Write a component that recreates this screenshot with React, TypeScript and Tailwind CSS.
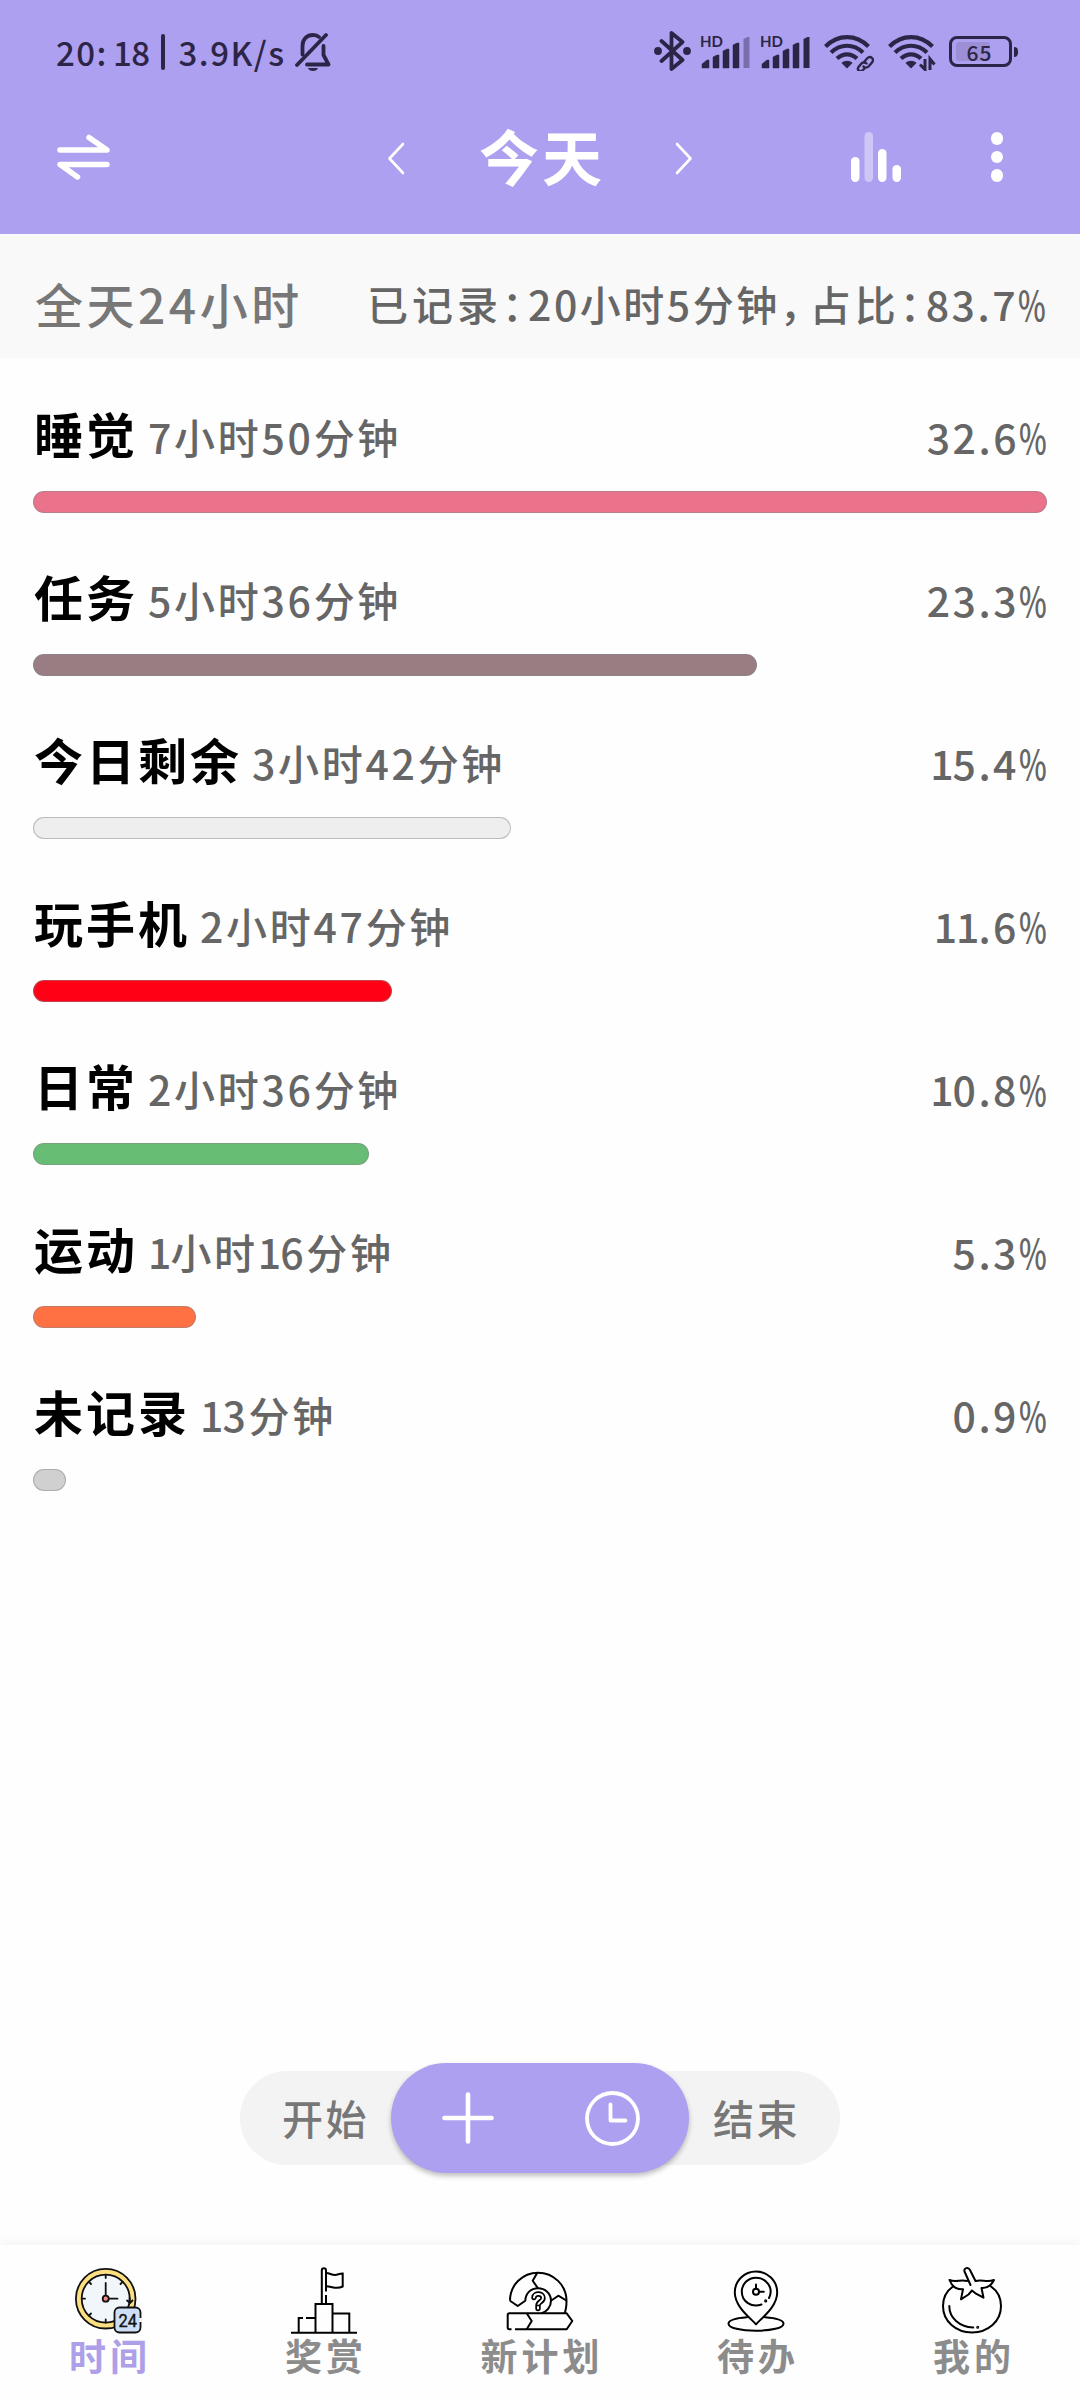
import type { ReactNode } from 'react';

interface Record {
  name: string;
  time: string;
  percent: string;
  width: number;
  color: string;
}

const records: Record[] = [
  { name: '睡觉', time: '7小时50分钟', percent: '32.6', width: 1014, color: '#ea728a' },
  { name: '任务', time: '5小时36分钟', percent: '23.3', width: 724, color: '#997d82' },
  { name: '今日剩余', time: '3小时42分钟', percent: '15.4', width: 478, color: '#eeeeee' },
  { name: '玩手机', time: '2小时47分钟', percent: '11.6', width: 359, color: '#ff0014' },
  { name: '日常', time: '2小时36分钟', percent: '10.8', width: 336, color: '#67bd74' },
  { name: '运动', time: '1小时16分钟', percent: '5.3', width: 163, color: '#ff7143' },
  { name: '未记录', time: '13分钟', percent: '0.9', width: 33, color: '#d0d0d0' },
];

// the digit 1 is set a little tighter than the others
function Digits({ value }: { value: string }) {
  return (
    <>
      {value.split(/(1)/).map((part, i) =>
        part === '1' ? <span key={i} className="tracking-[-1px]">1</span> : part,
      )}
    </>
  );
}

function Percent({ value }: { value: string }) {
  return (
    <span className="flex">
      <span><Digits value={value} /></span>
      <span className="w-[28px] origin-left scale-x-[0.72]">%</span>
    </span>
  );
}

function SignalBars({ faded }: { faded?: boolean }) {
  return (
    <svg width="52" height="36" viewBox="0 -2 52 36" fill="#2d2547" overflow="visible">
      <text x="0" y="10.500" fontSize="15.500" fontWeight="700" fontFamily="Lato, sans-serif" textLength="23" lengthAdjust="spacingAndGlyphs">HD</text>
      <path d="M2 32v-4l5-4h2v8zM13 32V21l4-2h2v13zM23 32V15l4-2h2v19zM33 32V9l4-2h2v25z" stroke="#2d2547" strokeWidth="0.5" />
      <path d="M43.500 32V3l4-2h2v31z" opacity={faded ? 0.4 : 1} />
    </svg>
  );
}

function Wifi({ children }: { children: ReactNode }) {
  return (
    <svg width="50" height="38" viewBox="0 0 50 38" fill="none" stroke="#2d2547" strokeWidth="4.200">
      <path d="M1.500 13.500C14 1 32 1 44.500 13.500" />
      <path d="M7 19.500C16.500 10.500 29.500 10.500 39 19.500" />
      <path d="M13 25.500C19 20 27 20 33 25.500" />
      <path d="M23 35.500l-5.500-5.500c3-3 8-3 11 0z" fill="#2d2547" stroke="none" />
      {children}
    </svg>
  );
}

function StatusBar() {
  return (
    <div className="h-[108px] pl-14 pr-[62px] flex items-start justify-between text-[#2d2547]">
      <div className="flex items-center pt-[28px] font-medium text-[33px] leading-[48px]">
        <span className="w-[95px] tracking-[1.500px]">20:<span className="pl-[5px] tracking-[-0.500px]">18</span></span>
        <span className="w-[3.500px] h-[36px] ml-[10px] mr-[14px] rounded-full bg-[#2d2547]" />
        <span className="w-[107px] tracking-[1.500px]">3.9K/s</span>
        <svg className="ml-[9px]" width="36" height="40" viewBox="0 0 36 40" fill="none" stroke="#2d2547" strokeWidth="3.800" strokeLinecap="round" strokeLinejoin="round">
          <path d="M2 33L31 3" />
          <path d="M7.500 22.500V14c0-7 4.500-11 10.500-11 2.500 0 4.500.5 6 2" />
          <path d="M28.500 14v9l5 9.500H12" />
          <path d="M13 36h10c-1 4-9 4-10 0z" fill="#2d2547" stroke="none" />
        </svg>
      </div>
      <div className="flex items-start pt-[31px]">
        <svg width="37" height="40" viewBox="0 0 37 40" fill="none" stroke="#2d2547" strokeWidth="3.800" strokeLinejoin="round" strokeLinecap="round">
          <path d="M7.500 10l21 19-11 9V2l11 9-21 19" />
          <circle cx="4" cy="20" r="2" fill="#2d2547" />
          <circle cx="33" cy="20" r="2" fill="#2d2547" />
        </svg>
        <div className="ml-[9px] mt-[3px] flex gap-2">
          <SignalBars faded />
          <SignalBars />
        </div>
        <div className="ml-3 mt-0.5 flex gap-[14px]">
          <Wifi>
            <g strokeWidth="2.400" strokeLinecap="round">
              <path d="M40.500 28.500l2.500-3c3.500-3.500 8 .5 5 4l-3.500 4c-1.500 1.500-4 1.500-5 0" />
              <path d="M42.500 30.500c-1.500-1.500-4-1.500-5.500.5l-2.500 3c-2 3.500 2 5.500 4.500 3l1.500-1.500" />
            </g>
          </Wifi>
          <Wifi>
            <path d="M37 26v10.500l-5-5M42 37V26l4.500 5.500" strokeWidth="3" />
          </Wifi>
        </div>
        <div className="ml-[11px] mt-[5px] flex items-center">
          <div className="relative w-[63px] h-[31px] rounded-[8px] border-[3px] border-[#2d2547] flex justify-center items-center">
            <div className="absolute left-[4px] top-[3px] w-[34px] h-[19px] rounded-[3px] bg-[#9d8fd6]" />
            <span className="relative pr-0.5 text-[21px] leading-[20px] tracking-[1px] font-medium">65</span>
          </div>
          <div className="ml-[2px] w-[4px] h-[10px] rounded-r bg-[#2d2547]" />
        </div>
      </div>
    </div>
  );
}

function TitleBar() {
  return (
    <div className="h-[126px] pl-[57px] pr-[77px] flex items-start text-white">
      <svg className="mt-[25px]" width="53" height="48" viewBox="0 0 53 48" fill="none" stroke="white" strokeWidth="5.500" strokeLinecap="round" strokeLinejoin="round">
        <path d="M3 17h47L32 4.500M50 31.500H3L20.500 44" />
      </svg>
      <svg className="ml-[277px] mt-[34px]" width="18" height="33" viewBox="0 0 18 33" fill="none" stroke="white" strokeWidth="2.600" strokeLinecap="round" strokeLinejoin="round">
        <path d="M16 2L2.500 16.500 16 31" />
      </svg>
      <h1 className="ml-[74px] w-[126px] mt-[3px] text-[60px] leading-[88px] tracking-[3px] font-bold whitespace-nowrap">今天</h1>
      <svg className="ml-[70px] mt-[34px]" width="18" height="33" viewBox="0 0 18 33" fill="none" stroke="white" strokeWidth="2.600" strokeLinecap="round" strokeLinejoin="round">
        <path d="M2 2l13.500 14.500L2 31" />
      </svg>
      <svg className="ml-auto mt-6" width="50" height="50" viewBox="0 0 50 50" fill="white">
        <rect x="0" y="25" width="8.500" height="25" rx="4.200" />
        <rect x="13.500" y="0" width="8.500" height="50" rx="4.200" opacity="0.4" />
        <rect x="27" y="17" width="8.500" height="33" rx="4.200" />
        <rect x="41.500" y="33" width="8.500" height="17" rx="4.200" />
      </svg>
      <div className="ml-[90px] mt-6 flex flex-col gap-[6px]">
        <span className="size-[12.500px] rounded-full bg-white" />
        <span className="size-[12.500px] rounded-full bg-white" />
        <span className="size-[12.500px] rounded-full bg-white" />
      </div>
    </div>
  );
}

function TimeIcon() {
  return (
    <svg width="72" height="72" viewBox="0 0 72 72" fill="none" stroke="#111" strokeWidth="1.800" strokeLinecap="round">
      <circle cx="33.700" cy="32.700" r="29.800" fill="#fbdf80" />
      <circle cx="33.700" cy="32.700" r="24" fill="#f1f6fa" />
      <path d="M33.700 9v3M33.700 53.500v3M10 32.700h3M17 16l2 2M50.500 16l-2 2M17 49.500l2-2" />
      <path d="M55 34.500l3 2.500 2.500-2.500M57.700 32v4" />
      <path d="M33.700 17v13M37 32.700h8.500" />
      <circle cx="33.700" cy="32.700" r="3" fill="#f58b8b" />
      <rect x="42.500" y="41.500" width="26" height="25" rx="5" fill="#cddff6" />
      <path d="M68.500 52v4" stroke="white" strokeWidth="2.500" strokeLinecap="butt" />
      <text x="46.500" y="61" fontSize="19" stroke="#111" strokeWidth="0.400" fill="#111" fontFamily="Roboto, sans-serif" textLength="18.500" lengthAdjust="spacingAndGlyphs">24</text>
    </svg>
  );
}

function RewardIcon() {
  return (
    <svg width="72" height="72" viewBox="0 0 72 72" fill="none" stroke="black" strokeWidth="2">
      <path d="M3 66.700h66" />
      <path d="M27.500 66.500V38h17v28.500M44.500 47.500h16.800v19M10.700 66.500V52H15M18 52h9.500" />
      <path d="M33.800 38V4.500c0-3 4.200-3 4.200 0v21M38 29v9" />
      <path d="M38 7c4 0 5 2 9 2 3 0 4-1.500 7.700-1.500v13c-3 1.500-5 1.500-7.700 1.200-4-.5-5-1.500-9-1.500" />
    </svg>
  );
}

function PlanIcon() {
  return (
    <svg width="72" height="72" viewBox="0 0 72 72" fill="none" stroke="black" strokeWidth="2" strokeLinejoin="round">
      <path d="M6 34.700C6 19 18.500 6.700 34 6.700S62.500 19 62.500 35c0 5-.5 9-2 12.300" />
      <path d="M6 34.700l7.700 5.300 7.600-5.300C21.500 27 27 22.300 34 22.300s13 5.200 13 12.400c0 6.500-4.500 11-9.500 12.600" />
      <path d="M33.300 6.700l-4.600 8L34 22.300M47.300 34.500l7-4.800 8 4.800" />
      <path d="M7.500 63.300H5.500c-1.200 0-1.800-.6-1.800-1.800V49c0-1.200.6-1.700 1.800-1.700h57.200l5.600 7.700-5.600 8.300H11" />
      <path d="M22.700 47.300l5 7.700-5 8.300" />
      <path d="M30 31.500c.5-5 9-4.500 9 .5 0 4-5 3.500-5 7.500v3" strokeWidth="5.400" strokeLinecap="round" />
      <path d="M30 31.500c.5-5 9-4.500 9 .5 0 4-5 3.500-5 7.500v3" stroke="white" strokeWidth="2" strokeLinecap="round" />
      <path d="M32 39.500h4" strokeWidth="1.500" />
    </svg>
  );
}

function TodoIcon() {
  return (
    <svg width="72" height="72" viewBox="0 0 72 72" fill="none" stroke="black" strokeWidth="2" strokeLinecap="round" strokeLinejoin="round">
      <path d="M36 58.300C31 52.500 14.800 41 14.800 26.500c0-12 9.700-21 21.200-21s21.200 9 21.200 21C57.200 41 41 52.500 36 58.300z" />
      <path d="M49 32c5-10-2.500-20.300-13-20.300-8 0-14.200 6.300-14.200 14 0 9.500 9.700 16.500 19.700 12.800" />
      <circle cx="36" cy="25.700" r="3" />
      <path d="M36 22.500V18.500M39.500 25.700h4.300" />
      <circle cx="45.700" cy="34.900" r="0.600" fill="black" />
      <path d="M27 51.200C17 52 8.500 54 8.500 57.700c0 4.300 12.500 7 27.500 7s27.500-2.700 27.500-7C63.500 54 55 52 45 51.200" />
    </svg>
  );
}

function TomatoIcon() {
  return (
    <svg width="72" height="72" viewBox="0 0 72 72" fill="none" stroke="black" strokeWidth="2" strokeLinecap="round" strokeLinejoin="round">
      <path d="M17 20.500C10.500 25 7 32 7 40c0 15.500 13 26.500 29 26.500S65 55.500 65 40c0-8-3.500-15-10-19.500" />
      <path d="M34.500 19l-6-13.500c-1-4 4-4.500 5.500-1.500l5.500 11c6.500-1.500 12 1.500 18.500-1-3 6-7 8.500-12.500 8l2 9.700-7.500-4-4-3.200-3.500 4-7.500 4.800 2-10c-6 .5-11-3-13.500-9.300 6 2.500 11-.5 17.500 1" />
      <path d="M13.300 40c0 12 10 21 24 21.500" />
      <circle cx="41.700" cy="61.200" r="0.500" fill="black" />
    </svg>
  );
}

const tabs = [
  { label: '时间', icon: <TimeIcon />, active: true },
  { label: '奖赏', icon: <RewardIcon /> },
  { label: '新计划', icon: <PlanIcon /> },
  { label: '待办', icon: <TodoIcon /> },
  { label: '我的', icon: <TomatoIcon /> },
];

export default function App() {
  return (
    <div className="w-[1080px] h-[2400px] flex flex-col bg-[#fefefe] overflow-hidden font-['Noto_Sans_CJK_SC',sans-serif]">
      <header className="bg-[#ada0f0]">
        <StatusBar />
        <TitleBar />
      </header>

      <div className="h-[124px] pl-[35px] pr-[34px] pt-[13px] flex items-center justify-between bg-[#f9f9f9] whitespace-nowrap font-medium">
        <span className="text-[48px] tracking-[3.500px] text-[#777]">全天24小时</span>
        <div className="flex pt-0.5 text-[41px] tracking-[2.500px] text-[#666] [font-feature-settings:'halt']">
          <span className="tracking-[4px]">已记录</span>
          <span className="pr-[3px]">：</span>
          <span>20小时5分钟</span>
          <span className="pr-[7px]">，</span>
          <span className="tracking-[4px]">占比</span>
          <span className="pr-[3px]">：</span>
          <Percent value="83.7" />
        </div>
      </div>

      <main className="flex-1 px-[33px]">
        {records.map(r => (
          <div key={r.name} className="h-[163px] pt-[41px]">
            <div className="h-[72px] flex items-center whitespace-nowrap">
              <span className="pl-px pb-1 text-[49px] leading-[68px] tracking-[3px] font-bold text-black">{r.name}</span>
              <span className="ml-[10px] pt-[3px] text-[41px] tracking-[2.700px] font-medium text-[#666]">
                <Digits value={r.time} />
              </span>
              <div className="ml-auto pt-[3px] text-[41px] tracking-[2.500px] font-medium text-[#666]">
                <Percent value={r.percent} />
              </div>
            </div>
            <div
              className="mt-5 h-[22px] rounded-[11px] border border-[#888]/50 bg-clip-border"
              style={{ width: r.width, backgroundColor: r.color }}
            />
          </div>
        ))}
      </main>

      <div className="mb-[72px] pb-2 flex justify-center items-center text-[41px] tracking-[2.500px] font-medium text-[#777]">
        <div className="w-[600px] h-[94px] rounded-full bg-[#f3f3f3] flex items-center justify-between">
          <span className="w-[151px] pl-[42px]">开始</span>
          <div className="w-[298px] h-[110px] shrink-0 rounded-full bg-[#ada0f0] shadow-[0_3px_5px_rgba(0,0,0,0.25)] flex items-center pl-[51px] pr-[49px] justify-between">
            <svg width="52" height="52" viewBox="0 0 52 52" stroke="white" strokeWidth="4.600" strokeLinecap="round">
              <path d="M26 2.500v47M2.500 26h47" />
            </svg>
            <svg width="55" height="55" viewBox="0 0 55 55" fill="none" stroke="white" strokeWidth="3.800" strokeLinecap="round" strokeLinejoin="round">
              <circle cx="27.500" cy="27.500" r="25.500" />
              <path d="M25.500 13.500v16h15" />
            </svg>
          </div>
          <span className="w-[151px] pl-[24px]">结束</span>
        </div>
      </div>

      <nav className="h-[155px] shrink-0 pt-[21px] flex bg-[#fefefe] shadow-[0_-4px_10px_rgba(0,0,0,0.04)]">
        {tabs.map(t => (
          <div key={t.label} className="w-[216px] flex flex-col items-center">
            {t.icon}
            <span className={`text-[37px] leading-[34px] tracking-[4px] -mr-[4px] font-bold ${t.active ? 'text-[#ada0e8]' : 'text-[#8c8c8c]'}`}>
              {t.label}
            </span>
          </div>
        ))}
      </nav>
    </div>
  );
}
